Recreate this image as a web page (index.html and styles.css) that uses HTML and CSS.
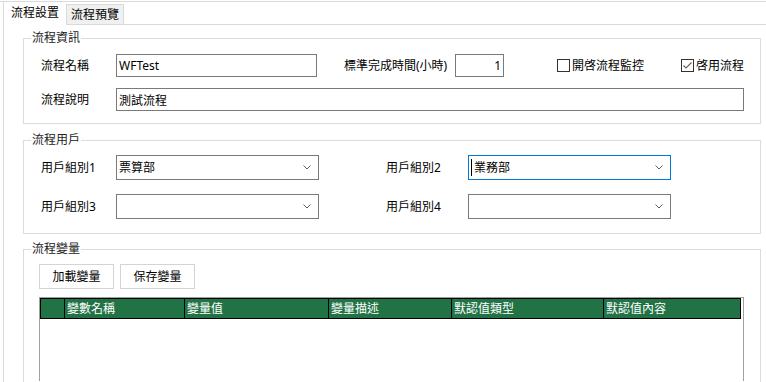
FILE: index.html
```html
<!DOCTYPE html>
<html lang="zh-Hant">
<head>
  <meta charset="UTF-8" />
  <title>流程設置</title>
  <link rel="stylesheet" href="styles.css">
</head>
<body>
  <div class="frame">
    <div class="tabstrip">
      <div class="tab active">流程設置</div>
      <div class="tab">流程預覽</div>
      <div class="tab-rest"></div>
    </div>

    <div class="page">
      <!-- 流程資訊 -->
      <div class="group group-info">
        <div class="group-title">流程資訊</div>
        <div class="row">
          <label class="lbl">流程名稱</label>
          <input class="field w-name" type="text" value="WFTest">
          <label class="lbl-hours">標準完成時間(小時)</label>
          <input class="field w-hours" type="text" value="1">
          <label class="chk chk-monitor"><span class="box"></span>開啓流程監控</label>
          <label class="chk"><span class="box">
            <svg width="11" height="11" viewBox="0 0 11 11"><polyline points="1.5,5.5 4,8 9.5,2.5" fill="none" stroke="#5f5f5f" stroke-width="1.1"/></svg>
          </span>啓用流程</label>
        </div>
        <div class="row row-gap">
          <label class="lbl">流程說明</label>
          <input class="field w-desc" type="text" value="測試流程">
        </div>
      </div>

      <!-- 流程用戶 -->
      <div class="group group-users">
        <div class="group-title">流程用戶</div>
        <div class="row">
          <label class="lbl">用戶組別1</label>
          <div class="combo"><span class="combo-text">票算部</span><svg class="arrow" width="8" height="5" viewBox="0 0 8 5"><polyline points="0.5,0.5 4,4 7.5,0.5" fill="none" stroke="#606060"/></svg></div>
          <label class="lbl lbl-right">用戶組別2</label>
          <div class="combo focused"><span class="caret"></span><span class="combo-text">業務部</span><svg class="arrow" width="8" height="5" viewBox="0 0 8 5"><polyline points="0.5,0.5 4,4 7.5,0.5" fill="none" stroke="#606060"/></svg></div>
        </div>
        <div class="row row-gap2">
          <label class="lbl">用戶組別3</label>
          <div class="combo"><span class="combo-text"></span><svg class="arrow" width="8" height="5" viewBox="0 0 8 5"><polyline points="0.5,0.5 4,4 7.5,0.5" fill="none" stroke="#606060"/></svg></div>
          <label class="lbl lbl-right">用戶組別4</label>
          <div class="combo"><span class="combo-text"></span><svg class="arrow" width="8" height="5" viewBox="0 0 8 5"><polyline points="0.5,0.5 4,4 7.5,0.5" fill="none" stroke="#606060"/></svg></div>
        </div>
      </div>

      <!-- 流程變量 -->
      <div class="group group-vars">
        <div class="group-title">流程變量</div>
        <div class="buttons">
          <button>加載變量</button>
          <button>保存變量</button>
        </div>
        <div class="grid">
          <div class="grid-head">
            <div class="cell c0"></div>
            <div class="cell c1">變數名稱</div>
            <div class="cell c2">變量值</div>
            <div class="cell c3">變量描述</div>
            <div class="cell c4">默認值類型</div>
            <div class="cell c5">默認值內容</div>
          </div>
        </div>
      </div>
    </div>
  </div>
</body>
</html>
```

FILE: styles.css
```css
body {
  margin: 0;
  width: 766px;
  height: 382px;
  overflow: hidden;
  background: #fff;
  color: #000;
  font-family: "Noto Sans", "Noto Sans CJK TC", sans-serif;
  font-size: 12px;
  line-height: 16px;
}

.frame {
  margin-top: 1px;
  padding-left: 3px;
  border-top: 1px solid #dadada;
}

/* tabs */
.tabstrip {
  display: flex;
  align-items: flex-end;
  height: 23px;
}

.tab {
  box-sizing: border-box;
  width: 58px;
  height: 21px;
  padding-top: 2px;
  border: 1px solid #dadada;
  background: #f0f0f0;
  text-align: center;
}

.tab.active {
  width: 63px;
  height: 23px;
  padding-top: 3px;
  border: none;
  border-left: 1px solid #dadada;
  background: #fff;
}

.tab-rest {
  flex: 1;
  box-sizing: border-box;
  height: 23px;
  border-bottom: 1px solid #dadada;
}

.page {
  height: 344px;
  padding: 13px 0 0 19px;
  border-left: 1px solid #dadada;
}

/* group boxes */
.group {
  position: relative;
  box-sizing: border-box;
  width: 738px;
  border: 1px solid #dcdcdc;
}

.group-title {
  position: absolute;
  top: -9px;
  left: 7px;
  padding: 0 1px;
  background: #fff;
  color: #222;
}

.group-info {
  padding: 15px 0 12px 17px;
}

.group-users {
  margin-top: 16px;
  padding: 14px 0 14px 17px;
}

.group-vars {
  margin-top: 15px;
  height: 133px;
  padding: 14px 0 0 15px;
  border-bottom: none;
}

.row {
  display: flex;
  align-items: center;
}

.row-gap {
  margin-top: 11px;
}

.row-gap2 {
  margin-top: 14px;
}

.lbl {
  width: 75px;
}

.lbl-right {
  width: 82px;
  margin-left: 67px;
}

.lbl-hours {
  width: 111px;
  margin-left: 27px;
}

/* text boxes */
.field {
  box-sizing: border-box;
  height: 23px;
  margin: 0;
  padding: 0 2px;
  border: 1px solid #7a7a7a;
  border-radius: 0;
  outline: none;
  font: inherit;
  color: #000;
}

.w-name {
  width: 201px;
}

.w-hours {
  width: 49px;
  text-align: right;
}

.w-desc {
  width: 628px;
}

/* check boxes */
.chk {
  display: flex;
  align-items: center;
}

.chk-monitor {
  width: 124px;
  margin-left: 53px;
}

.box {
  box-sizing: border-box;
  width: 13px;
  height: 13px;
  margin-right: 2px;
  border: 1px solid #333;
  display: flex;
  align-items: center;
  justify-content: center;
}

/* combo boxes */
.combo {
  box-sizing: border-box;
  width: 203px;
  height: 25px;
  padding: 0 7px 0 2px;
  border: 1px solid #7a7a7a;
  display: flex;
  align-items: center;
}

.combo.focused {
  border-color: #0078d7;
}

.combo-text {
  flex: 1;
}

.caret {
  width: 1px;
  height: 17px;
  margin-right: 2px;
  background: #000;
}

/* buttons */
.buttons {
  display: flex;
  gap: 6px;
}

button {
  box-sizing: border-box;
  width: 75px;
  height: 25px;
  padding: 0;
  border: 1px solid #d4d4d4;
  background: #fff;
  font: inherit;
  color: #000;
}

/* data grid */
.grid {
  box-sizing: border-box;
  width: 705px;
  height: 84px;
  margin-top: 8px;
  border: 1px solid #a0a0a0;
  border-bottom: none;
}

.grid-head {
  display: flex;
  box-sizing: border-box;
  width: 701px;
  height: 21px;
  border: 1px solid #000;
  border-left: none;
  background: #217346;
  color: #fff;
}

.cell {
  box-sizing: border-box;
  padding-left: 2px;
  border-left: 1px solid #000;
  line-height: 19px;
}

.c0 { width: 24px; }
.c1 { width: 120px; }
.c2 { width: 144px; }
.c3 { width: 123px; }
.c4 { width: 152px; }
.c5 { width: 137px; }
```
